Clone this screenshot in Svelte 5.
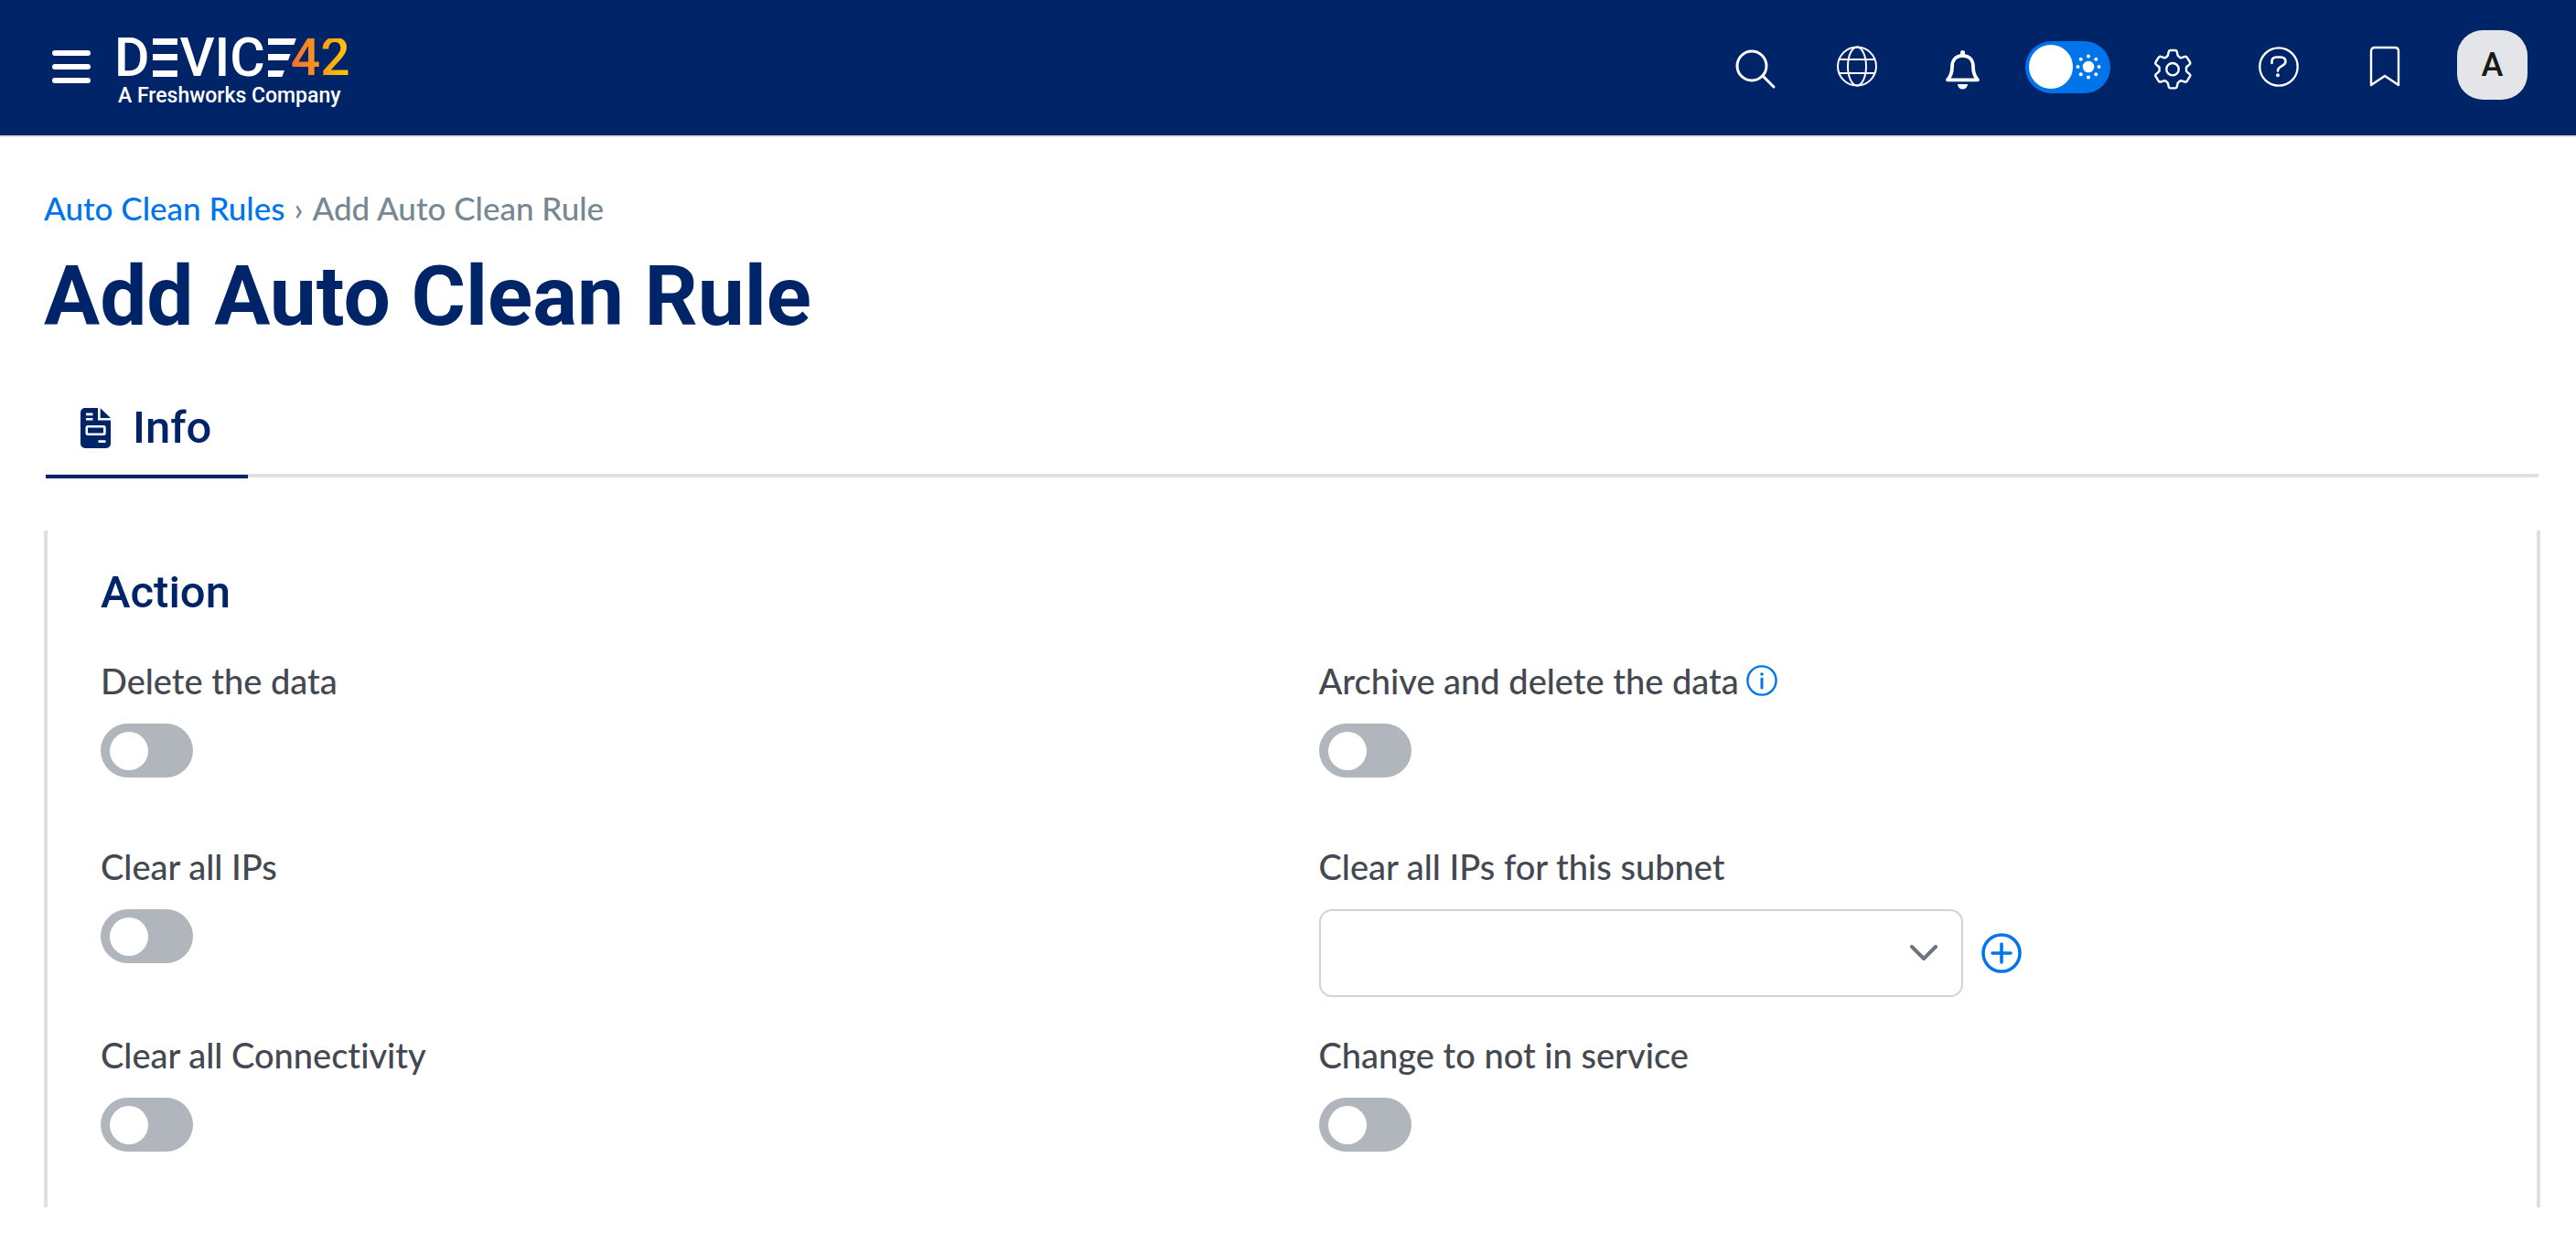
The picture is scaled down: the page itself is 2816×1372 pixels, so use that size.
<script>
  let dayMode = $state(true);
  let subnet = $state('');
  const fields = $state([
    { id: 'delete', label: 'Delete the data', on: false },
    { id: 'archive', label: 'Archive and delete the data', on: false, info: true },
    { id: 'clear-ips', label: 'Clear all IPs', on: false },
    { id: 'subnet', label: 'Clear all IPs for this subnet', select: true },
    { id: 'connectivity', label: 'Clear all Connectivity', on: false },
    { id: 'service', label: 'Change to not in service', on: false }
  ]);
</script>

<header>
  <div class="brand">
    <button class="menu" aria-label="Open menu">
      <svg width="42" height="36" viewBox="0 0 42 36"><path d="M3 3h36M3 18h36M3 33h36" stroke="#fff" stroke-width="6" stroke-linecap="round" /></svg>
    </button>
    <a class="logo" href="#home">
      <span class="word">D<span class="bars">E</span>VIC<span class="bars slant">E</span><span class="num">42</span></span>
      <span class="tagline">A Freshworks Company</span>
    </a>
  </div>

  <div class="tools">
    <button aria-label="Search">
      <svg viewBox="0 0 60 60"><circle cx="31" cy="29" r="16" stroke-width="3" /><path d="M43 40l12 12" stroke-width="3" /></svg>
    </button>
    <button aria-label="Language">
      <svg viewBox="0 0 60 60" stroke-width="2"><circle cx="30" cy="29.500" r="21" /><ellipse cx="30" cy="29.500" rx="10" ry="21" /><path d="M11 22h38M11 37h38" /></svg>
    </button>
    <button aria-label="Notifications">
      <svg viewBox="0 0 60 60"><path d="M29.500 17.800C22 17.800 18 23 18 30C18 38 16 41 13 44.300H46C43 41 41 38 41 30C41 23 37 17.800 29.500 17.800Z" stroke-width="3.800" /><path d="M27 17v-2.500a2.500 2.500 0 0 1 5 0V17zM24 49h11a5.500 5.500 0 0 1-11 0z" class="solid" /></svg>
    </button>
    <label class="theme">
      <input type="checkbox" aria-label="Day mode" bind:checked={dayMode} />
      <span class="knob"></span>
      <svg class="sun" viewBox="0 0 30 30">
        <g class="solid"><circle cx="15" cy="15" r="6.300" /><circle cx="15" cy="3.500" r="2" /><circle cx="15" cy="26.500" r="2" /><circle cx="3.500" cy="15" r="2" /><circle cx="26.500" cy="15" r="2" /><circle cx="6.700" cy="6.700" r="2" /><circle cx="23.300" cy="6.700" r="2" /><circle cx="6.700" cy="23.300" r="2" /><circle cx="23.300" cy="23.300" r="2" /></g>
      </svg>
    </label>
    <button aria-label="Settings">
      <svg viewBox="0 0 60 60" stroke-width="2.400"><circle cx="30" cy="32.700" r="6.700" /><path d="M27.500 12h5.500q1.300 0 1.700 1.500l1 4.200q1.300 1.800 3.300 2.600l4.500-1.400q1.500-.4 2.300.9l3.200 5.200q.8 1.400-.4 2.300l-3.600 3.200v4.400l3.600 3.200q1.200.9.400 2.300l-3.200 5.200q-.8 1.300-2.300.9l-4.500-1.400q-2 .8-3.300 2.600l-1 4.200q-.4 1.500-1.700 1.500h-5.500q-1.300 0-1.700-1.500l-1-4.200q-1.300-1.800-3.300-2.600l-4.500 1.400q-1.500.4-2.300-.9l-3.200-5.200q-.8-1.400.4-2.300l3.600-3.200v-4.400l-3.600-3.200q-1.200-.9-.4-2.300l3.200-5.200q.8-1.300 2.300-.9l4.500 1.400q2-.8 3.300-2.600l1-4.200q.4-1.500 1.700-1.500z" /></svg>
    </button>
    <button aria-label="Help">
      <svg viewBox="0 0 60 60"><circle cx="30" cy="30" r="20.700" stroke-width="2.300" /><path d="M22.500 26v-1.500q0-5 5-5h4.500q5.500 0 5.500 5c0 5-8.500 4.500-8.500 10" stroke-width="2.600" /><circle class="solid" cx="29" cy="39.300" r="2" /></svg>
    </button>
    <button aria-label="Bookmarks">
      <svg viewBox="0 0 60 60" stroke-width="2.400"><path d="M15 50V13q0-4 4-4h22q4 0 4 4v37l-15-10z" /></svg>
    </button>
    <button class="avatar" aria-label="Account">A</button>
  </div>
</header>

<main>
  <nav class="crumbs" aria-label="Breadcrumb">
    <a href="#rules">Auto Clean Rules</a><span>›</span><span>Add Auto Clean Rule</span>
  </nav>
  <h1>Add Auto Clean Rule</h1>

  <nav class="tabs">
    <a class="tab" href="#info" aria-current="page">
      <svg width="33" height="44" viewBox="0 0 33 44">
        <path fill="#002468" fill-rule="evenodd" d="M5 0H19V13.500H33V39a5 5 0 0 1-5 5H5a5 5 0 0 1-5-5V5a5 5 0 0 1 5-5ZM6 5.500V8.300H13.500V5.500ZM6 11V13.500H13.500V11ZM8 19a2.500 2.500 0 0 0-2.500 2.500v6A2.500 2.500 0 0 0 8 30H25.200a2.500 2.500 0 0 0 2.500-2.500v-6A2.500 2.500 0 0 0 25.200 19ZM19.500 35.200V38H27.500V35.200Z" />
        <path fill="#002468" d="M21.700 .3L33 11H21.700ZM8 21.500H25V27.500H8Z" />
      </svg>
      Info
    </a>
  </nav>

  <section class="card">
    <h2>Action</h2>
    <div class="fields">
      {#each fields as field (field.id)}
        <div class="field">
          <div class="caption">
            <label for={field.id}>{field.label}</label>
            {#if field.info}
              <button aria-label="More information">
                <svg width="34" height="34" viewBox="0 0 34 34" fill="none" stroke="#0075eb"><circle cx="17" cy="17" r="15.600" stroke-width="2.400" /><path d="M17 15v10" stroke-width="3" stroke-linecap="round" /><circle cx="17" cy="10" r="1.800" fill="#0075eb" stroke="none" /></svg>
              </button>
            {/if}
          </div>
          {#if field.select}
            <div class="picker">
              <div class="select">
                <select id={field.id} bind:value={subnet}><option value=""></option></select>
                <svg width="30" height="18" viewBox="0 0 30 18"><path d="M2 2l13 13L28 2" fill="none" stroke="#6c757d" stroke-width="4" stroke-linecap="round" stroke-linejoin="round" /></svg>
              </div>
              <button aria-label="Add subnet">
                <svg width="44" height="44" viewBox="0 0 44 44" fill="none" stroke="#0075eb" stroke-linecap="round"><circle cx="22" cy="22" r="20" stroke-width="3.500" /><path d="M12 22h20M22 12v20" stroke-width="3.500" /></svg>
              </button>
            </div>
          {:else}
            <input class="switch" type="checkbox" id={field.id} bind:checked={field.on} />
          {/if}
        </div>
      {/each}
    </div>
  </section>
</main>

<style>
  :global(body) {
    background: #fff;
    font-family: Lato, "Liberation Sans", sans-serif;
    font-variant-ligatures: none;
  }
  button {
    display: grid;
    place-items: center;
    padding: 0;
    border: 0;
    background: none;
    cursor: pointer;
  }
  a {
    text-decoration: none;
  }
  svg {
    display: block;
  }
  header {
    display: flex;
    align-items: center;
    justify-content: space-between;
    box-sizing: border-box;
    min-height: 150px;
    padding: 0 53px 2px 57px;
    border-bottom: 2px solid #dcdee2;
    background: #002468;
    color: #fff;
  }
  .brand {
    display: flex;
    align-items: center;
    gap: 26px;
  }
  .logo {
    display: flex;
    flex-direction: column;
    gap: 7px;
    padding-top: 15px;
    color: #fff;
  }
  .word {
    display: flex;
    align-items: center;
    font: 500 59px/42px Roboto, sans-serif;
  }
  /* The stem-less E of the wordmark: three stacked bars */
  .bars {
    width: 27px;
    height: 42px;
    margin: 0 3px;
    font-size: 24px;
    color: transparent;
    background: linear-gradient(#fff 7px, transparent 7px 17px, #fff 17px 24px, transparent 24px 35px, #fff 35px);
  }
  .slant {
    width: 31px;
    margin-right: 0;
    clip-path: polygon(0 0, 100% 0, 50% 100%, 0 100%);
  }
  .num {
    margin-left: -6px;
    font-size: 57px;
    color: transparent;
    background: linear-gradient(90deg, #f26f30, #fb9a1d 50%, #ffcb05);
    background-clip: text;
  }
  .tagline {
    padding-left: 4px;
    font: 500 23px/28px Roboto, sans-serif;
  }
  .tools {
    display: flex;
    align-items: center;
  }
  .tools > button:not(.avatar) {
    width: 116px;
  }
  .tools > button svg {
    width: 60px;
    height: 60px;
    fill: none;
    stroke: #fff;
    stroke-linecap: round;
    stroke-linejoin: round;
  }
  .tools .solid {
    fill: #fff;
    stroke: none;
  }
  .theme {
    display: flex;
    align-items: center;
    gap: 2px;
    box-sizing: border-box;
    width: 93px;
    height: 57px;
    margin: 0 10px;
    padding: 0 4px;
    border-radius: 29px;
    background: #0075eb;
    cursor: pointer;
  }
  .theme input {
    appearance: none;
    position: absolute;
    margin: 0;
  }
  .knob {
    width: 48px;
    height: 48px;
    border-radius: 50%;
    background: #fff;
  }
  .sun {
    width: 30px;
    height: 30px;
  }
  .avatar {
    width: 77px;
    height: 76px;
    margin: 0 0 4px 21px;
    border-radius: 28px;
    background: #e4e5e9;
    color: #191919;
    font: 500 36px/48px Roboto, sans-serif;
  }
  main {
    padding: 53px 39px 52px 48px;
  }
  .crumbs {
    display: flex;
    gap: 10px;
    font-size: 35px;
    line-height: 48px;
    font-weight: 500;
    color: #778893;
  }
  .crumbs a {
    color: #0075eb;
  }
  h1 {
    margin: 19px 0 46px;
    font: 700 91px/108px Roboto, sans-serif;
    color: #002468;
  }
  .tabs {
    display: flex;
    margin: 0 2px;
    border-bottom: 4px solid #dee1e8;
  }
  .tab {
    display: flex;
    align-items: center;
    gap: 24px;
    margin-bottom: -5px;
    padding: 14px 40px 21px 38px;
    border-bottom: 4px solid #002468;
    font: 500 49px/60px Roboto, sans-serif;
    color: #002468;
  }
  .card {
    margin-top: 58px;
    padding: 38px 0 27px 58px;
    border: solid #e0e0e0;
    border-width: 0 4px;
  }
  h2 {
    margin: 0 0 36px;
    font: 500 49px/60px Roboto, sans-serif;
    color: #002468;
  }
  .fields {
    display: grid;
    grid-template-columns: 1fr 1fr;
    row-gap: 33px;
  }
  .field {
    min-height: 170px;
  }
  .caption {
    display: flex;
    align-items: center;
    gap: 8px;
    margin-bottom: 17px;
    font-size: 38px;
    line-height: 60px;
    font-weight: 500;
    color: #444951;
  }
  .switch {
    appearance: none;
    display: flex;
    align-items: center;
    box-sizing: border-box;
    width: 101px;
    height: 59px;
    margin: 0;
    padding: 0 10px;
    border-radius: 30px;
    background: #b1b6bd;
    cursor: pointer;
  }
  .switch::before {
    content: "";
    width: 42px;
    height: 42px;
    border-radius: 50%;
    background: #fff;
  }
  .switch:checked {
    justify-content: flex-end;
    background: #0075eb;
  }
  .picker {
    display: flex;
    align-items: center;
    gap: 20px;
  }
  .select {
    display: grid;
    align-items: center;
    width: 704px;
  }
  .select > * {
    grid-area: 1 / 1;
  }
  .select svg {
    justify-self: end;
    margin-right: 28px;
    pointer-events: none;
  }
  select {
    appearance: none;
    width: 100%;
    height: 96px;
    padding: 0 70px 0 24px;
    border: 2px solid #ced4da;
    border-radius: 14px;
    background: #fff;
    font: inherit;
    font-size: 38px;
    color: #444951;
  }
</style>
